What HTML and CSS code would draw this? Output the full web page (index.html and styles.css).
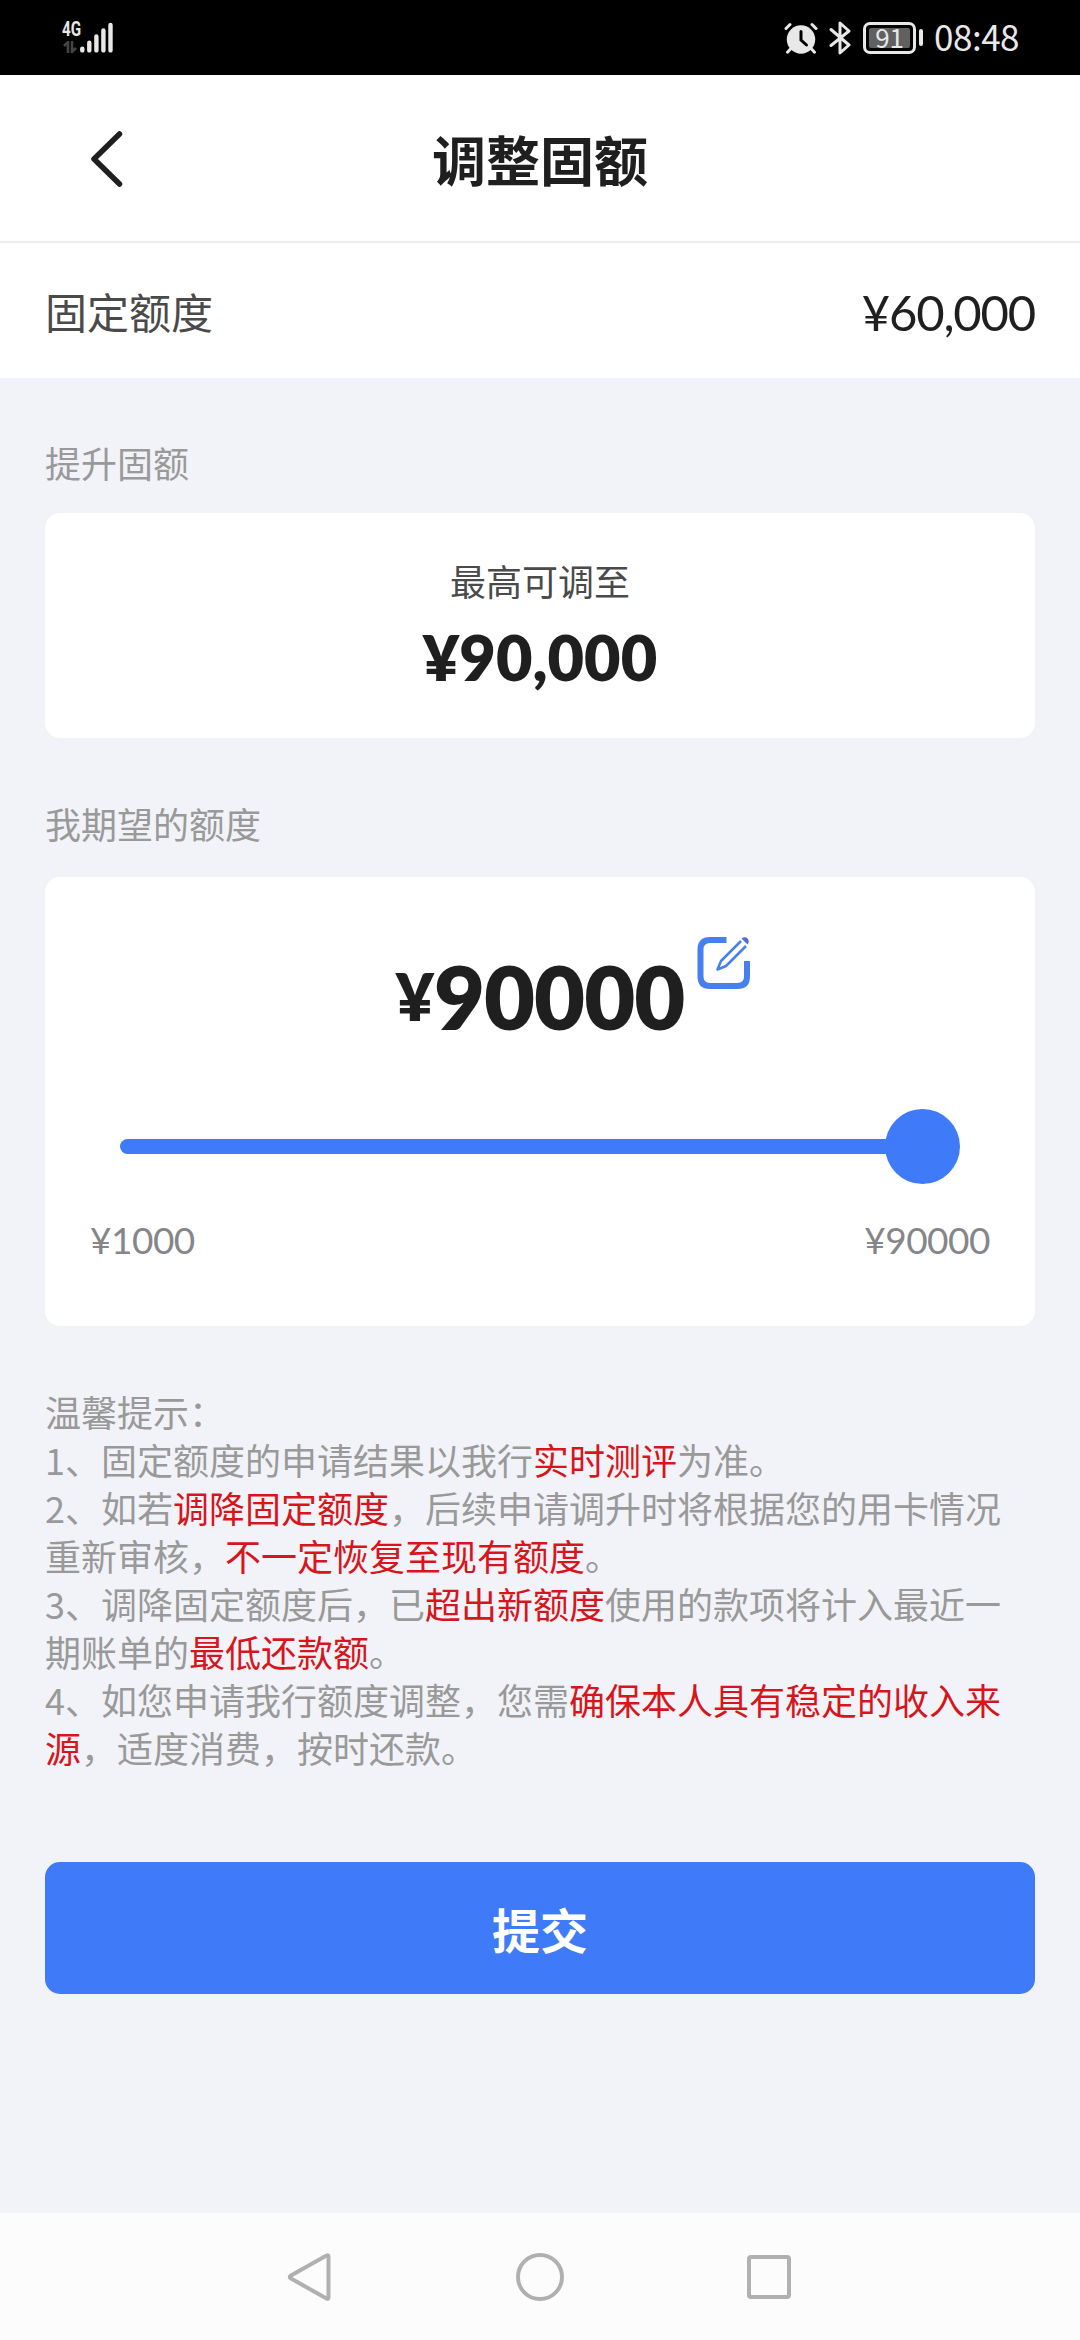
FILE: index.html
```html
<!DOCTYPE html>
<html lang="zh-CN">
<head>
<meta charset="utf-8">
<title>调整固额</title>
<link rel="stylesheet" href="styles.css">
</head>
<body>
<div class="screen">
  <div class="status">
    <div class="signal">
      <div class="network">
        <span class="gen">4G</span>
        <svg width="14" height="12" viewBox="0 0 14 12" fill="none" stroke="#444" stroke-width="2.6"><path d="M1 5l4-4v11M9 0v11l4-4"/></svg>
      </div>
      <svg class="bars" width="33" height="32" viewBox="0 0 33 32" stroke="#e8e8e8" stroke-width="4.4" stroke-linecap="round"><path d="M2.3 27.6v1.8M9.3 21.8v7.6M16.4 15.5v13.9M23.4 9.5v19.9M30.5 4v25.4"/></svg>
    </div>
    <div class="indicators">
      <svg class="alarm" width="34" height="32" viewBox="0 0 34 32" fill="none" stroke="#e8e8e8" stroke-linecap="round"><circle cx="17" cy="17.5" r="14.2" fill="#e8e8e8" stroke="none"/><path d="M2 6.5l4-4M32 6.5l-4-4M6.500 27l-3 3.200M27.500 27l3 3.200" stroke-width="3"/><path d="M17 9.500v8.500l5.500 5" stroke="#000" stroke-width="3"/></svg>
      <svg class="bt" width="22" height="34" viewBox="0 0 22 34" fill="none" stroke="#e8e8e8" stroke-width="3" stroke-linejoin="round" stroke-linecap="round"><path d="M2 8.500l18 15.500-9 8V2l9 8L2 24.500"/></svg>
      <div class="battery"><span class="charge">91</span></div>
      <span class="tip"></span>
      <span class="time">08:48</span>
    </div>
  </div>

  <header class="header">
    <svg class="back" width="32" height="56" viewBox="0 0 32 56" fill="none" stroke="#1f1f1f" stroke-width="5.5" stroke-linecap="round" stroke-linejoin="round"><path d="M28.500 3L3 28l25.500 25"/></svg>
    <h1 class="title">调整固额</h1>
  </header>

  <div class="current"><span class="current-label">固定额度</span><span class="current-value">¥60,000</span></div>

  <main class="content">
    <h2 class="label">提升固额</h2>
    <section class="card max-card">
      <p class="max-label">最高可调至</p>
      <p class="max-value">¥90,000</p>
    </section>

    <h2 class="label expect">我期望的额度</h2>
    <section class="card expect-card">
      <div class="amount">
        <span class="yen">¥</span><span class="digits">90000</span>
        <svg class="edit" width="54" height="54" viewBox="0 0 54 54" fill="none" stroke="#4680ee"><path d="M29.500 4H13Q3.500 4 3.500 13.500v27Q3.500 50 13 50h27.500q9.500 0 9.500-9.500V25" stroke-width="6"/><path d="M44 5L24 25l-3.500 8.500 8.500-3.500L49 10" stroke-width="2.500" stroke-linejoin="round"/><path d="M44.500 2.500q3.500-2.500 6 0t0 6z" fill="#4b6fd8" stroke="none"/></svg>
      </div>
      <div class="slider"><span class="track"></span><span class="thumb"></span></div>
      <div class="range"><span>¥1000</span><span>¥90000</span></div>
    </section>

    <div class="tips">
      <p>温馨提示：</p>
      <p>1、固定额度的申请结果以我行<em>实时测评</em>为准。</p>
      <p>2、如若<em>调降固定额度</em>，后续申请调升时将根据您的用卡情况重新审核，<em>不一定恢复至现有额度</em>。</p>
      <p>3、调降固定额度后，已<em>超出新额度</em>使用的款项将计入最近一期账单的<em>最低还款额</em>。</p>
      <p>4、如您申请我行额度调整，您需<em>确保本人具有稳定的收入来源</em>，适度消费，按时还款。</p>
    </div>

    <button class="submit">提交</button>
  </main>

  <nav class="nav">
    <svg width="50" height="50" viewBox="0 0 50 50"><path d="M40.500 3.500Q42.500 2.500 42.500 5v40q0 2.500-2 1.500L5 26.500Q2.500 25 5 23.500z"/></svg>
    <svg width="50" height="50" viewBox="0 0 50 50"><circle cx="25" cy="25" r="22"/></svg>
    <svg width="50" height="50" viewBox="0 0 50 50"><rect x="5" y="5" width="40" height="40" rx="2"/></svg>
  </nav>
</div>
</body>
</html>
```
FILE: styles.css
```css
* { box-sizing: border-box; margin: 0; padding: 0; }

body {
  width: 1080px;
  font-family: "Noto Sans CJK SC", "Noto Sans", sans-serif;
  color: #1f1f1f;
  background: #f2f3f8;
}

.screen { display: flex; flex-direction: column; height: 2340px; }

.status {
  display: flex;
  justify-content: space-between;
  height: 75px;
  padding: 0 61px 0 62px;
  background: #000;
  color: #e8e8e8;
}
.signal { display: flex; padding-top: 21px; }
.network { display: flex; flex-direction: column; width: 18px; gap: 4px; }
.network svg { margin-left: 1px; }
.gen {
  font: bold 20px/16px "Roboto", sans-serif;
  transform: scaleX(.76);
  transform-origin: left;
}
.indicators { display: flex; align-items: center; }
.alarm { margin-right: 11px; }
.bt { margin-right: 12px; }
.battery {
  width: 53px;
  height: 32px;
  padding: 3px;
  border: 3px solid #e8e8e8;
  border-radius: 7px;
}
.charge {
  display: block;
  height: 20px;
  background: #606060;
  border-radius: 2px;
  font-size: 26px;
  line-height: 17px;
  text-align: center;
}
.tip { width: 4px; height: 17px; margin: 0 11px 0 3px; border-radius: 3px; background: #e8e8e8; }
.time { font-size: 35px; line-height: 71px; letter-spacing: -.5px; height: 75px; }

.header {
  display: flex;
  align-items: center;
  height: 168px;
  padding: 1px 91px 0;
  background: #fff;
  border-bottom: 2px solid #ececec;
}
.title { flex: 1; margin-right: 32px; font-size: 54px; font-weight: 700; text-align: center; }

.current {
  display: flex;
  justify-content: space-between;
  align-items: center;
  height: 135px;
  padding: 0 45px;
  background: #fff;
}
.current-label { font-size: 42px; color: #4a4a4a; }
.current-value { padding-top: 2px; font-family: "Lato", sans-serif; font-size: 49px; letter-spacing: -1.2px; }

.content { display: flex; flex-direction: column; flex: 1; padding: 60px 45px 0; }
.label { font-size: 36px; line-height: 48px; font-weight: 400; color: #999; }
.label.expect { margin-top: 61px; }
.card { background: #fff; border-radius: 15px; }

.max-card { height: 225px; margin-top: 27px; padding-top: 43px; text-align: center; }
.max-label { font-size: 36px; line-height: 48px; color: #4a4a4a; }
.max-value { margin-top: 8px; font-family: "Lato", sans-serif; font-size: 63px; line-height: 90px; font-weight: 800; }

.expect-card {
  display: flex;
  flex-direction: column;
  height: 449px;
  margin-top: 30px;
  padding: 59px 45px 0;
}
.amount {
  position: relative;
  align-self: center;
  height: 116px;
  font-family: "Lato", sans-serif;
  font-weight: 800;
  line-height: 120px;
  white-space: nowrap;
}
.yen { font-size: 66px; line-height: 1; vertical-align: 9px; }
.digits { font-size: 88px; letter-spacing: -1px; }
.edit { position: absolute; left: calc(100% + 13px); top: 0; }

.slider { display: flex; align-items: center; margin: 57px 30px 0; }
.track { flex: 1; height: 15px; margin-right: -20px; border-radius: 8px; background: #3f7bf8; }
.thumb { width: 75px; height: 75px; border-radius: 50%; background: #3f7bf8; }
.range {
  display: flex;
  justify-content: space-between;
  margin-top: 32px;
  font-family: "Lato", sans-serif;
  font-size: 37px;
  line-height: 48px;
  letter-spacing: -.5px;
  color: #85868a;
}

.tips { margin-top: 61px; font-size: 36px; line-height: 48px; color: #999; }
.tips em { font-style: normal; color: #d6161c; }

.submit {
  height: 132px;
  margin-top: 91px;
  border: 0;
  border-radius: 15px;
  background: #3f7bf8;
  color: #fff;
  font: 700 48px "Noto Sans CJK SC", sans-serif;
}

.nav {
  display: flex;
  justify-content: center;
  align-items: center;
  gap: 179px;
  height: 127px;
  background: #fcfcfc;
}
.nav svg { fill: none; stroke: #b0b0b0; stroke-width: 4; }
```
